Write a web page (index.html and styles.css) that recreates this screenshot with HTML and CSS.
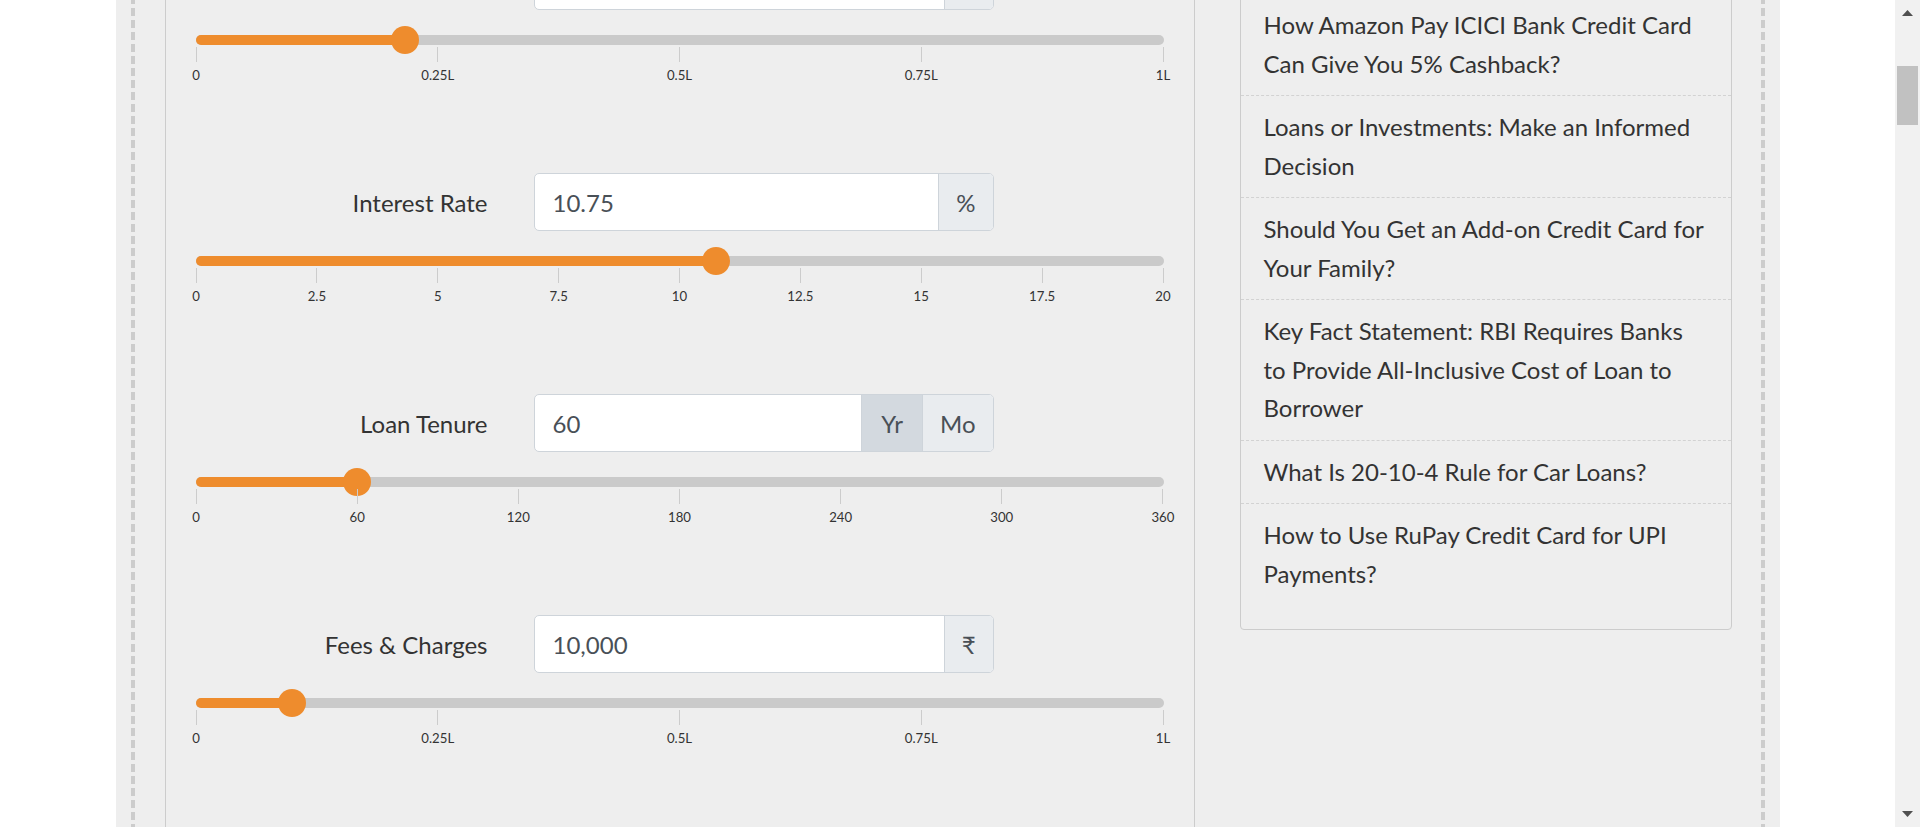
FILE: index.html
```html
<!DOCTYPE html>
<html lang="en">
<head>
<meta charset="utf-8">
<title>EMI Calculator</title>
<link rel="stylesheet" href="styles.css">
</head>
<body>
<div class="screen">
  <main class="page">
    <div class="container">
      <div class="frame">
        <section class="calc">
          <div class="field field-first">
            <div class="field-row">
              <span class="field-label"></span>
              <div class="input-group">
                <input class="input" type="text" value="" aria-label="Loan Amount">
                <span class="addon addon-blank"></span>
              </div>
            </div>
            <div class="track"><div class="fill" style="width:21.6%"></div><div class="thumb"></div></div>
            <div class="ticks">
              <div class="tick"><span>0</span></div>
              <div class="tick"><span>0.25L</span></div>
              <div class="tick"><span>0.5L</span></div>
              <div class="tick"><span>0.75L</span></div>
              <div class="tick"><span>1L</span></div>
            </div>
          </div>

          <div class="field">
            <div class="field-row">
              <label class="field-label">Interest Rate</label>
              <div class="input-group">
                <input class="input" type="text" value="10.75">
                <span class="addon">%</span>
              </div>
            </div>
            <div class="track"><div class="fill" style="width:53.75%"></div><div class="thumb"></div></div>
            <div class="ticks">
              <div class="tick"><span>0</span></div>
              <div class="tick"><span>2.5</span></div>
              <div class="tick"><span>5</span></div>
              <div class="tick"><span>7.5</span></div>
              <div class="tick"><span>10</span></div>
              <div class="tick"><span>12.5</span></div>
              <div class="tick"><span>15</span></div>
              <div class="tick"><span>17.5</span></div>
              <div class="tick"><span>20</span></div>
            </div>
          </div>

          <div class="field">
            <div class="field-row">
              <label class="field-label">Loan Tenure</label>
              <div class="input-group">
                <input class="input" type="text" value="60">
                <span class="addon addon-active">Yr</span>
                <span class="addon">Mo</span>
              </div>
            </div>
            <div class="track"><div class="fill" style="width:16.667%"></div><div class="thumb"></div></div>
            <div class="ticks">
              <div class="tick"><span>0</span></div>
              <div class="tick"><span>60</span></div>
              <div class="tick"><span>120</span></div>
              <div class="tick"><span>180</span></div>
              <div class="tick"><span>240</span></div>
              <div class="tick"><span>300</span></div>
              <div class="tick"><span>360</span></div>
            </div>
          </div>

          <div class="field">
            <div class="field-row">
              <label class="field-label">Fees &amp; Charges</label>
              <div class="input-group">
                <input class="input" type="text" value="10,000">
                <span class="addon">₹</span>
              </div>
            </div>
            <div class="track"><div class="fill" style="width:10%"></div><div class="thumb"></div></div>
            <div class="ticks">
              <div class="tick"><span>0</span></div>
              <div class="tick"><span>0.25L</span></div>
              <div class="tick"><span>0.5L</span></div>
              <div class="tick"><span>0.75L</span></div>
              <div class="tick"><span>1L</span></div>
            </div>
          </div>
        </section>

        <aside class="sidebar">
          <ul class="card">
            <li class="card-item"><a class="card-link" href="#">How Amazon Pay ICICI Bank Credit Card Can Give You 5% Cashback?</a></li>
            <li class="card-item"><a class="card-link" href="#">Loans or Investments: Make an Informed Decision</a></li>
            <li class="card-item"><a class="card-link" href="#">Should You Get an Add-on Credit Card for Your Family?</a></li>
            <li class="card-item"><a class="card-link" href="#">Key Fact Statement: RBI Requires Banks to Provide All-Inclusive Cost of Loan to Borrower</a></li>
            <li class="card-item"><a class="card-link" href="#">What Is 20-10-4 Rule for Car Loans?</a></li>
            <li class="card-item"><a class="card-link" href="#">How to Use RuPay Credit Card for UPI Payments?</a></li>
          </ul>
        </aside>
      </div>
    </div>
  </main>
  <div class="scrollbar">
    <svg class="sb-arrow sb-up" width="11" height="6" viewBox="0 0 11 6"><polygon points="0,6 5.5,0 11,6" fill="#505050"/></svg>
    <div class="sb-thumb"></div>
    <div class="sb-space"></div>
    <svg class="sb-arrow sb-down" width="11" height="6" viewBox="0 0 11 6"><polygon points="0,0 11,0 5.5,6" fill="#505050"/></svg>
  </div>
</div>
</body>
</html>
```

FILE: styles.css
```css
html, body {
  margin: 0;
  padding: 0;
  background: #ffffff;
}

body {
  font-family: Lato, "Open Sans", Arial, sans-serif;
  color: #333333;
  overflow: hidden;
}

.screen {
  display: flex;
  height: 827px;
  overflow: hidden;
}

.page {
  flex: 1;
  min-width: 0;
  overflow: hidden;
}

.container {
  width: 1664px;
  height: 100%;
  margin: 0 auto;
  padding: 0 15px;
  box-sizing: border-box;
  background: #eeeeee;
}

.frame {
  display: flex;
  height: 100%;
  padding: 0 34px;
  box-sizing: border-box;
  background:
    linear-gradient(#cccccc 0 8px, transparent 8px) left 0 top 8px / 4px 12px repeat-y,
    linear-gradient(#cccccc 0 8px, transparent 8px) right 0 top 8px / 4px 12px repeat-y;
}

/* calculator column */
.calc {
  flex: none;
  width: 1030px;
  box-sizing: border-box;
  border-left: 1px solid #cccccc;
  border-right: 1px solid #cccccc;
  padding: 0 30px;
}

.field {
  margin-bottom: 90px;
}

.field-first {
  margin-top: -48px;
}

.field-row {
  display: flex;
  align-items: center;
  height: 58px;
}

.field-label {
  flex: none;
  width: 292px;
  margin-right: 46px;
  text-align: right;
  font-size: 24px;
  color: #333333;
}

.input-group {
  flex: none;
  display: flex;
  width: 460px;
  height: 58px;
  box-sizing: border-box;
  border: 1px solid #ced4da;
  border-radius: 5px;
  background: #ffffff;
  overflow: hidden;
}

.input {
  flex: 1;
  min-width: 0;
  border: 0;
  outline: none;
  padding: 0 18px;
  margin: 0;
  background: transparent;
  font-family: Lato, "Open Sans", Arial, sans-serif;
  font-size: 24px;
  color: #495057;
}

.addon {
  flex: none;
  display: flex;
  align-items: center;
  padding: 0 17px;
  border-left: 1px solid #ced4da;
  background: #e9ecef;
  font-size: 24px;
  color: #495057;
}

.addon-blank {
  width: 14px;
}

.addon-active {
  padding: 0 19px;
  background: #d3d9df;
}

.track {
  display: flex;
  align-items: center;
  height: 10px;
  margin-top: 25px;
  border-radius: 5px;
  background: #cacaca;
}

.fill {
  height: 10px;
  border-radius: 5px 0 0 5px;
  background: #ee8c2d;
}

.thumb {
  flex: none;
  width: 28px;
  height: 28px;
  margin-left: -14px;
  border-radius: 50%;
  background: #ee8c2d;
}

.ticks {
  display: flex;
  justify-content: space-between;
  margin-top: 2px;
}

.tick {
  width: 1px;
  display: flex;
  flex-direction: column;
  align-items: center;
}

.tick::before {
  content: "";
  width: 1px;
  height: 15px;
  background: #cccccc;
}

.tick span {
  margin-top: 5px;
  font-size: 13.2px;
  line-height: 16px;
  white-space: nowrap;
  color: #333333;
}

/* sidebar */
.sidebar {
  flex: none;
  width: 492px;
  margin-left: 45px;
}

.card {
  list-style: none;
  margin: -7px 0 0;
  padding: 0 0 24px;
  border: 1px solid #cccccc;
  border-radius: 4px;
}

.card-item {
  padding: 12px 26px 12px 23px;
  border-bottom: 1px dashed #d2d2d2;
  font-size: 24px;
  line-height: 38.5px;
}

.card-item:last-child {
  border-bottom: 0;
}

.card-link {
  color: #333333;
  text-decoration: none;
}

/* fake browser scrollbar */
.scrollbar {
  flex: none;
  width: 25px;
  display: flex;
  flex-direction: column;
  align-items: center;
  background: #f1f1f1;
}

.sb-arrow {
  display: block;
  flex: none;
}

.sb-up {
  margin-top: 10px;
}

.sb-thumb {
  flex: none;
  width: 21px;
  height: 59px;
  margin-top: 50px;
  background: #c1c1c1;
}

.sb-space {
  flex: 1;
}

.sb-down {
  margin-bottom: 10px;
}
```
